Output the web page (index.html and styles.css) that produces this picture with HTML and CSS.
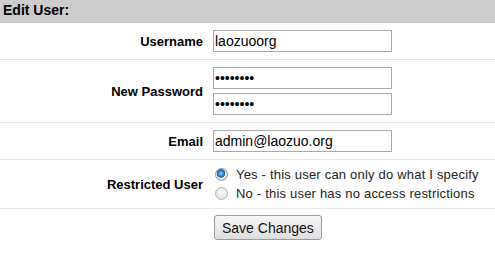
FILE: index.html
```html
<!DOCTYPE html>
<html>
<head>
<meta charset="utf-8">
<title>Edit User</title>
<link rel="stylesheet" href="styles.css">
</head>
<body>
<div class="panel">
  <div class="title">Edit User:</div>
  <form class="form">
    <div class="row">
      <label class="label" for="u">Username</label>
      <div class="field"><input class="text" id="u" type="text" value="laozuoorg"></div>
    </div>
    <div class="row">
      <label class="label" for="p1">New Password</label>
      <div class="field stack">
        <input class="text" id="p1" type="password" value="12345678">
        <input class="text" type="password" value="12345678">
      </div>
    </div>
    <div class="row">
      <label class="label" for="e">Email</label>
      <div class="field"><input class="text" id="e" type="text" value="admin@laozuo.org"></div>
    </div>
    <div class="row row-radio">
      <span class="label">Restricted User</span>
      <div class="field stack-radio">
        <label class="opt"><input class="radio" type="radio" name="r" checked>Yes - this user can only do what I specify</label>
        <label class="opt"><input class="radio" type="radio" name="r">No - this user has no access restrictions</label>
      </div>
    </div>
    <div class="row row-last">
      <span></span>
      <div class="field"><button class="btn" type="button">Save Changes</button></div>
    </div>
  </form>
</div>
</body>
</html>
```

FILE: styles.css
```css
html, body {
  margin: 0;
  padding: 0;
  background: #fff;
}
body {
  font-family: "Liberation Sans", Arial, sans-serif;
  color: #111;
}
.panel {
  width: 495px;
}
.title {
  height: 23px;
  line-height: 21px;
  padding-left: 3px;
  background: #cccccc;
  font-size: 14px;
  font-weight: bold;
  color: #000;
}
.form {
  margin: 0;
}
.row {
  display: grid;
  grid-template-columns: 203px 1fr;
  column-gap: 10px;
  align-items: center;
  padding: 7px 0;
  border-bottom: 1px solid #e6e6e6;
}
.label {
  text-align: right;
  font-size: 13px;
  font-weight: bold;
  color: #000;
}
.field {
  display: flex;
  align-items: center;
}
.stack {
  flex-direction: column;
  align-items: flex-start;
  gap: 4px;
}
.text {
  box-sizing: border-box;
  width: 179px;
  height: 22px;
  margin: 0;
  padding: 0 1px;
  border: 1px solid #a9a9a9;
  font-family: "Liberation Sans", Arial, sans-serif;
  font-size: 14px;
  color: #000;
  background: #fff;
  outline: none;
}
.row-radio {
  padding: 5px 0;
}
.stack-radio {
  flex-direction: column;
  align-items: flex-start;
}
.opt {
  display: flex;
  align-items: center;
  height: 19px;
  font-size: 13px;
  letter-spacing: 0.2px;
  color: #222;
}
.radio {
  appearance: none;
  -webkit-appearance: none;
  box-sizing: border-box;
  width: 13px;
  height: 13px;
  margin: 0 8px 0 2px;
  border-radius: 50%;
  border: 1px solid #b4b4b4;
  background: radial-gradient(circle at 50% 40%, #fbfbfb 0%, #e4e4e4 70%, #d6d6d6 100%);
}
.radio:checked {
  border-color: #8a9cb0;
  background:
    radial-gradient(circle at 45% 40%, #8fd0f5 0px, #2f8ad0 2.5px, #1a5f9c 4px, transparent 4.5px),
    radial-gradient(circle, #f4f4f4 0%, #dadada 100%);
}
.row-last {
  border-bottom: none;
  padding-top: 6px;
}
.btn {
  box-sizing: border-box;
  height: 25px;
  margin: 0 0 0 1px;
  padding: 0 7px;
  border: 1px solid #9c9c9c;
  border-radius: 3px;
  background: linear-gradient(#f7f7f7, #dedede);
  font-family: "Liberation Sans", Arial, sans-serif;
  font-size: 14px;
  color: #111;
}
```
